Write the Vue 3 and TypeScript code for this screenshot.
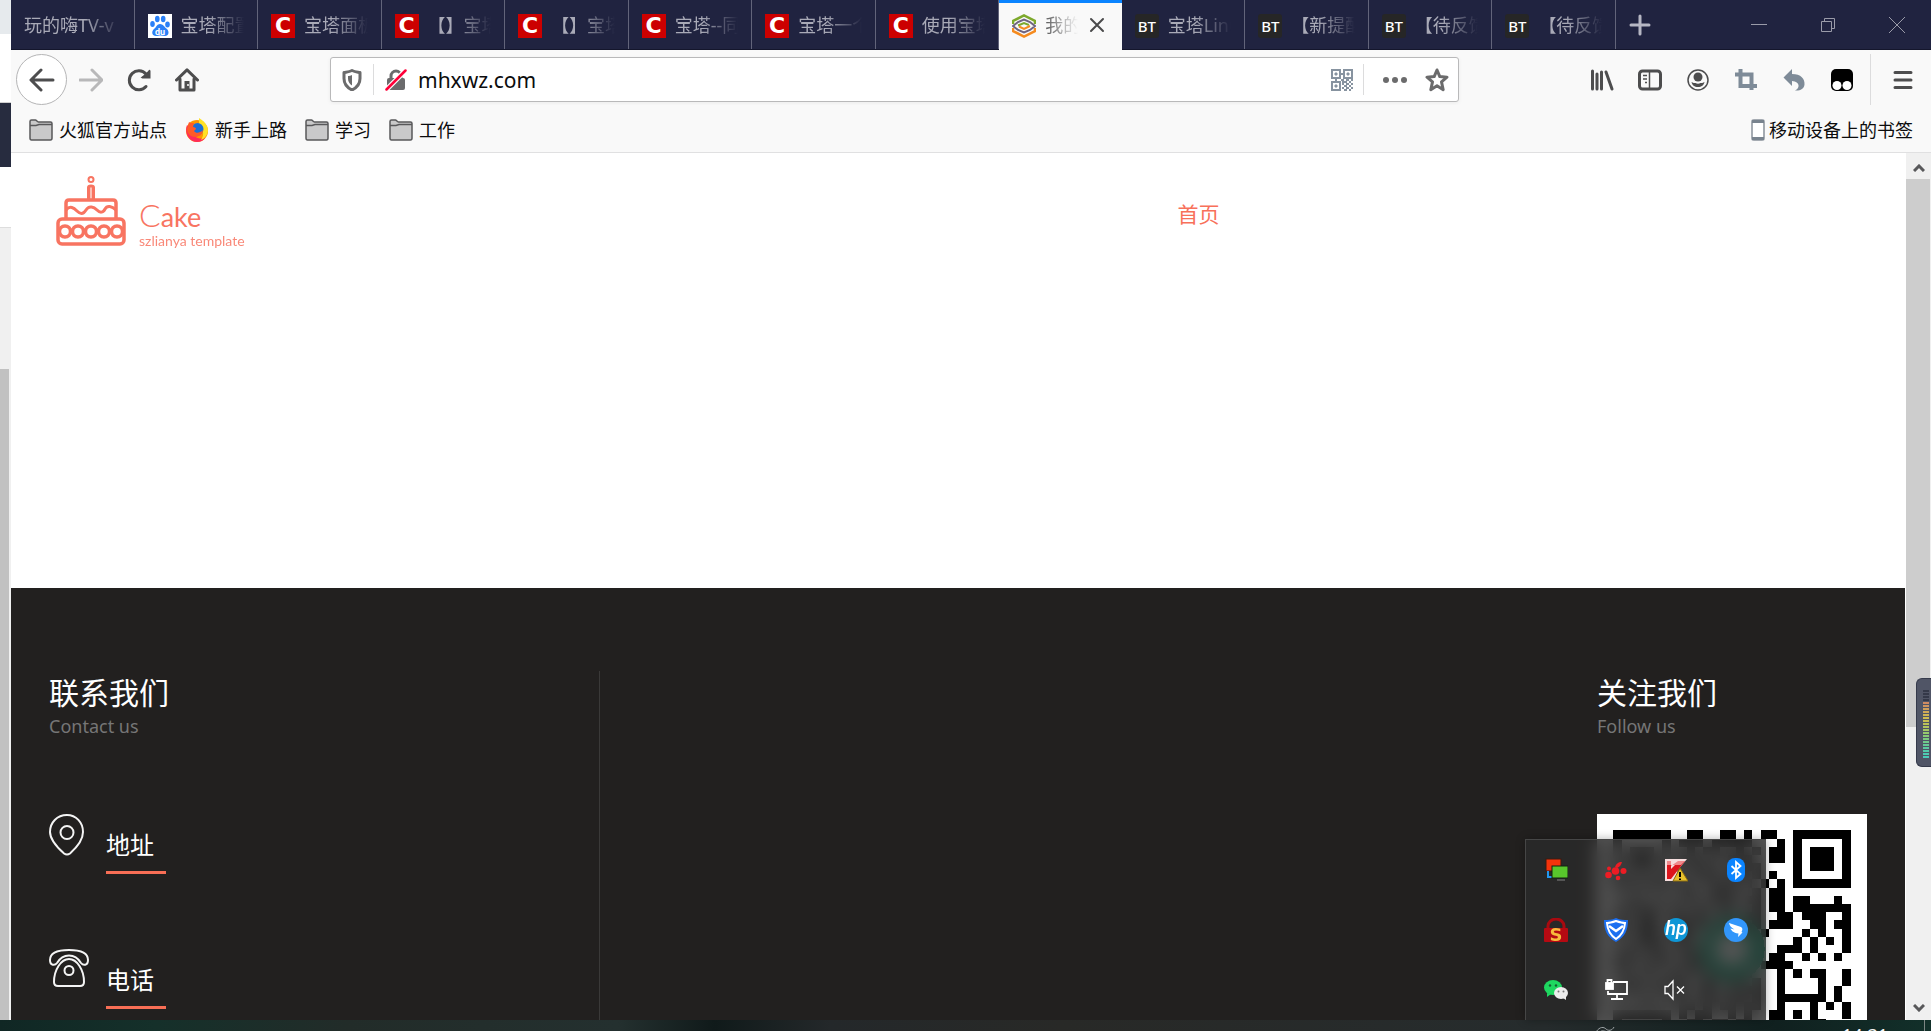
<script setup lang="ts">
import { ref } from 'vue'

type Favicon = 'none' | 'baidu' | 'c' | 'hex' | 'bt'

interface Tab {
  title: string
  icon: Favicon
  active?: boolean
}

const tabs: Tab[] = [
  { title: '玩的嗨TV-v', icon: 'none' },
  { title: '宝塔配置', icon: 'baidu' },
  { title: '宝塔面板', icon: 'c' },
  { title: '【】宝塔', icon: 'c' },
  { title: '【】宝塔', icon: 'c' },
  { title: '宝塔--同步', icon: 'c' },
  { title: '宝塔一个', icon: 'c' },
  { title: '使用宝塔', icon: 'c' },
  { title: '我的网', icon: 'hex', active: true },
  { title: '宝塔Linux', icon: 'bt' },
  { title: '【新提醒', icon: 'bt' },
  { title: '【待反馈', icon: 'bt' },
  { title: '【待反馈', icon: 'bt' },
]

const bookmarks = [
  { title: '火狐官方站点', folder: true },
  { title: '新手上路', folder: false },
  { title: '学习', folder: true },
  { title: '工作', folder: true },
]

const address = ref('mhxwz.com')

/* QR matrix, one string per module row */
const qrRows = [
  '#######..##..##.#.##..#######',
  '#.....#.###.#####...#.#.....#',
  '#.###.#..#.##..#.#.##.#.###.#',
  '#.###.#.##..#.###..##.#.###.#',
  '#.###.#..###..#.##....#.###.#',
  '#.....#.#..##.##.#.#..#.....#',
  '#######.#.#.#.#.#.#.#.#######',
  '........##..###..#.##........',
  '#.##.##..#.##.#.##.##.##...#.',
  '.##.#..##.#..##..#.##.#######',
  '#..###.#..##.#..##..##.###..#',
  '##.##..####.#....#.###..##.##',
  '.#.###.##..#......#....#.#..#',
  '#..##.#.##.#..........#.#.#.#',
  '.##.##..#.##........###.#...#',
  '#.#..##.##.#.......##..#.#.#.',
  '##.##.#..##..#....####.......',
  '.#..#..##.#.##.##...#.#.##..#',
  '#.##.##.#..##.##.#..#....#..#',
  '.##..#.##.##..#.##..#....#.#.',
  '#..##.#.#..##.##.#..######.#.',
  '........##.#.##.##..#...#.#.#',
  '#######.#.##..#.#..##.#.#...#',
  '#.....#..##.##.##..##...##...',
  '#.###.#.#.##.#.#....#####.#..',
]
const qrPath = qrRows
  .flatMap((row, y) => [...row].map((m, x) => (m === '#' ? `M${x + 2} ${y + 2}h1v1h-1z` : '')))
  .join('')

const meterColors = [
  '#343949', '#343949', '#343949', '#343949', '#cf8b62', '#cf9660', '#cfa05c', '#cfa957',
  '#cfb453', '#cfbc50', '#c7c052', '#bcc358', '#b3c65e', '#a5c865', '#96ca6d', '#89ca76',
  '#7ccb80', '#70cc8b', '#66cb96', '#5ccba1', '#54cbaa', '#4ecbb2', '#4bcbb8',
]

const contacts = [
  { label: '地址', icon: 'pin' },
  { label: '电话', icon: 'phone' },
]
</script>

<template>
  <div class="desktop">
    <div class="workspace">
      <div class="behind" aria-hidden="true">
        <span class="b1"></span><span class="b2"></span><span class="b3"></span><span class="b4"></span>
        <span class="b5"></span><span class="b6"></span>
      </div>

      <div class="browser">
        <header class="tabbar">
          <div class="tabs">
            <div v-for="(tab, i) in tabs" :key="i" class="tab" :class="{ active: tab.active }">
              <button class="tab-main" type="button">
                <svg v-if="tab.icon === 'baidu'" class="fav" viewBox="0 0 24 24">
                  <rect width="24" height="24" fill="#fff" />
                  <g fill="#2b80f7">
                    <ellipse cx="4.500" cy="10" rx="2.300" ry="3" />
                    <ellipse cx="9.300" cy="5" rx="2.300" ry="3.300" />
                    <ellipse cx="15.200" cy="5" rx="2.300" ry="3.300" />
                    <ellipse cx="19.500" cy="10.500" rx="2.300" ry="3" />
                    <path d="M12 10c-3 0-3.500 3-6 5-3 2.500-2 7 2 7 2 0 3-.5 4.500-.5s3 .5 4.500.5c4 0 4.500-4.500 2-7-2.500-2-4-5-7-5z" />
                  </g>
                  <text x="12" y="20.500" text-anchor="middle" font-size="9" font-weight="700" font-family="Roboto, sans-serif" fill="#fff">du</text>
                </svg>
                <span v-else-if="tab.icon === 'c'" class="fav fav-c">C</span>
                <svg v-else-if="tab.icon === 'hex'" class="fav" viewBox="0 0 24 24" fill="none" stroke-width="2.500">
                  <path d="M1 10V7L12 1.500 23 7v3" stroke="#7da92c" />
                  <path d="M1 14v3l11 5.500L23 17v-3" stroke="#f58b1f" />
                  <path d="M1 12l5-4 6-2.500L18 8l5 4-5 4-6 2.500L6 16z" stroke="#6f6480" stroke-width="2" />
                  <path d="M6 11.500l6-2.500 5 2" stroke="#7da92c" stroke-width="2" />
                  <path d="M7 12.500l5 2.500 6-3" stroke="#f58b1f" stroke-width="2" />
                </svg>
                <span v-else-if="tab.icon === 'bt'" class="fav fav-bt">BT</span>
                <span class="tab-title">{{ tab.title }}</span>
              </button>
              <button v-if="tab.active" class="tab-close" type="button" aria-label="关闭标签页">
                <svg viewBox="0 0 16 16"><path d="M2 2l12 12M14 2L2 14" stroke="#4a4a4b" stroke-width="2" stroke-linecap="round" /></svg>
              </button>
            </div>
          </div>
          <div class="window-tools">
            <button class="new-tab" type="button" aria-label="新标签页">
              <svg viewBox="0 0 22 22"><path d="M11 2v18M2 11h18" stroke="#b6b7c3" stroke-width="3" stroke-linecap="round" /></svg>
            </button>
            <div class="window-buttons">
              <button type="button" aria-label="最小化">
                <svg viewBox="0 0 16 16" fill="none" stroke="#9a9ba9"><path d="M0 7.500h16" /></svg>
              </button>
              <button type="button" aria-label="还原">
                <svg viewBox="0 0 16 16" fill="none" stroke="#9a9ba9"><path d="M1.500 4.500h10v10h-10zM4.500 4V1.500h10v10H12" /></svg>
              </button>
              <button type="button" aria-label="关闭">
                <svg viewBox="0 0 16 16" fill="none" stroke="#9a9ba9"><path d="M0 0l16 16M16 0L0 16" /></svg>
              </button>
            </div>
          </div>
        </header>

        <nav class="toolbar">
          <button class="back" type="button" aria-label="后退">
            <svg viewBox="0 0 26 24" fill="none" stroke="#4d4d4e" stroke-width="3" stroke-linecap="round" stroke-linejoin="round"><path d="M24 12H3M12 2L2 12l10 10" /></svg>
          </button>
          <button class="tool forward" type="button" aria-label="前进">
            <svg viewBox="0 0 24 24" fill="none" stroke="#b8b8b9" stroke-width="3" stroke-linecap="round" stroke-linejoin="round"><path d="M1 12h22M13 2l10 10-10 10" /></svg>
          </button>
          <button class="tool" type="button" aria-label="刷新">
            <svg viewBox="0 0 24 24" fill="none" stroke="#4d4d4e" stroke-width="3" stroke-linecap="round"><path d="M19 18.500A9.500 9.500 0 1 1 19 6" /><path d="M13.500 10H23V1.500z" fill="#4d4d4e" stroke="none" /><path d="M22.500 3v6.500h-7" stroke-width="2" /></svg>
          </button>
          <button class="tool" type="button" aria-label="主页">
            <svg viewBox="0 0 24 24" fill="none" stroke="#4d4d4e" stroke-width="3" stroke-linecap="round" stroke-linejoin="round"><path d="M1.500 12L12 1.800 22.500 12M5 11v11h14V11" /><path d="M9.500 21v-8h5v8z" fill="#4d4d4e" stroke="none" /><circle cx="13" cy="17" r="1" fill="#fff" stroke="none" /></svg>
          </button>

          <div class="urlbar">
            <svg class="shield" viewBox="0 0 20 22" fill="none" stroke="#6b6b6c" stroke-width="3" stroke-linejoin="round"><path d="M10 1.500c3 1.500 5.500 1.500 8 2v6c0 5-3 9-8 11.500-5-2.500-8-6.500-8-11.500v-6c2.500-.5 5-.5 8-2z" /><path d="M10 6v10.500c-2.500-1.500-4-4-4-7V7c1.500 0 2.500-.3 4-1z" fill="#6b6b6c" stroke="none" /></svg>
            <i class="bar"></i>
            <svg class="lock" viewBox="0 0 22 22"><path d="M6 10V7a5 5 0 0 1 10 0v3" fill="none" stroke="#6b6b6c" stroke-width="3" /><rect x="2" y="9" width="18" height="12" rx="2" fill="#6b6b6c" /><path d="M1.500 20.500l19-19" stroke="#fff" stroke-width="5" /><path d="M1.500 20.500l19-19" stroke="#ff0039" stroke-width="2.500" stroke-linecap="round" /></svg>
            <input v-model="address" class="address" type="text" aria-label="地址栏" />
            <svg class="qr-mini" viewBox="0 0 22 22" fill="none" stroke="#8793a0" stroke-width="2">
              <path d="M1 1h8v8H1zM13 1h8v8h-8zM1 13h8v8H1z" />
              <path d="M4 4h2v2H4zM16 4h2v2h-2zM4 16h2v2H4z" fill="#8793a0" stroke-width="1" />
              <path d="M9 5h4M5 9v4M10 11h3M11 13h2M15 11h3M20 11h2M13 13h3M18 13h2M11 15h2M15 15h3M20 15h2M13 17h3M18 17h2M11 19h2M15 19h3M20 19h2M13 21h3M18 21h2" />
            </svg>
            <i class="bar"></i>
            <button class="dots" type="button" aria-label="页面操作">
              <svg viewBox="0 0 24 6" fill="#6b6b6c"><circle cx="3" cy="3" r="3" /><circle cx="12" cy="3" r="3" /><circle cx="21" cy="3" r="3" /></svg>
            </button>
            <button class="star" type="button" aria-label="收藏">
              <svg viewBox="0 0 24 24" fill="none" stroke="#6b6b6c" stroke-width="3" stroke-linejoin="round"><path d="M12 2l2.800 6.600 7.200.6-5.500 4.700 1.700 7.800L12 17.800l-6.200 3.900 1.700-7.800L2 9.200l7.200-.6z" /></svg>
            </button>
          </div>

          <div class="actions">
            <button type="button" aria-label="我的足迹">
              <svg viewBox="0 0 24 24" stroke="#4d4d4e" stroke-width="3" stroke-linecap="round"><path d="M2.500 3v18M7 6v15M11.500 4v17M16 4l6 17" /></svg>
            </button>
            <button type="button" aria-label="侧栏">
              <svg viewBox="0 0 24 24" fill="none" stroke="#4d4d4e" stroke-width="3"><rect x="1.500" y="3" width="21" height="18" rx="3" /><path d="M11.500 3v18" stroke-width="1.500" /><path d="M5 7.500h4M5 11h4M7 14.500h2" stroke-width="1.500" /></svg>
            </button>
            <button type="button" aria-label="账户">
              <svg viewBox="0 0 24 24"><circle cx="12" cy="12" r="10" fill="none" stroke="#4d4d4e" stroke-width="1.500" /><circle cx="12" cy="9" r="4.500" fill="#4d4d4e" /><path d="M5.500 14c1.500 1 3 1 4 1 1.500 1 3.500 1 5 0 1 0 2.500 0 4-1-.5 3-3 5-6.500 5s-6-2-6.500-5z" fill="#4d4d4e" /></svg>
            </button>
            <button type="button" aria-label="截图">
              <svg viewBox="0 0 24 24" fill="none" stroke="#7e8b98" stroke-width="4"><path d="M1 6.500h16.500V22M6.500 1v17H23" /></svg>
            </button>
            <button type="button" aria-label="撤销">
              <svg viewBox="0 0 24 24" fill="#7e8b98"><path d="M10 1v5c9 0 13 5 12.500 10.500C22 21 18 23 13 22.500c5-2 5.500-9-3-9.500v5L1.500 9.500z" /></svg>
            </button>
            <button type="button" aria-label="脚本管理">
              <svg viewBox="0 0 24 24"><rect x="1" y="1" width="22" height="22" rx="5" fill="#000" /><circle cx="7" cy="17.500" r="4.500" fill="#fff" /><circle cx="17" cy="17.500" r="4.500" fill="#fff" /></svg>
            </button>
          </div>
          <button class="menu" type="button" aria-label="菜单">
            <svg viewBox="0 0 20 20" stroke="#4d4d4e" stroke-width="3" stroke-linecap="round"><path d="M2 2.500h16M2 10h16M2 17.500h16" /></svg>
          </button>
        </nav>

        <nav class="bookmarks">
          <a v-for="b in bookmarks" :key="b.title" href="#">
            <svg v-if="b.folder" class="folder" viewBox="0 0 24 22" fill="#c9c9ca" stroke="#58585a" stroke-width="1.500"><path d="M1 19V2.500C1 1.500 1.500 1 2.500 1h4c1 0 1.500 2 3 2h12c1 0 1.500.5 1.500 1.500V19c0 1-.5 2-1.500 2h-19C1.500 21 1 20 1 19z" /><path d="M1 6.500h6L10 5.500h13" fill="none" /></svg>
            <svg v-else class="folder" viewBox="0 0 24 24">
              <circle cx="12" cy="13" r="11" fill="#ff9500" />
              <path d="M2 7C-1 15 4 24 12 24c4 0 7-2 8-4-6 2-12-1-13-7z" fill="#ff2c5a" />
              <path d="M14 0c5 3 9 7 9 13-1 5-4 8-7 9 4-6 2-11-2-14z" fill="#ffe226" />
              <circle cx="12.500" cy="11" r="6" fill="#1b6fd6" />
              <path d="M4 4c1 1 3 1 5 1l-1 4c2 0 3 1 3 2l-2 2c2 3 6 2 9-1-1 5-4 7-8 7-5 0-8-4-8-8z" fill="#ff5a28" />
            </svg>
            <span>{{ b.title }}</span>
          </a>
          <a class="mobile" href="#">
            <svg viewBox="0 0 14 22"><rect x="1" y="1" width="12" height="20" rx="2" fill="#fff" stroke="#a5abb2" stroke-width="2" /><path d="M1 1h12v3H1zM1 18h12v3H1z" fill="#78838e" /></svg>
            <span>移动设备上的书签</span>
          </a>
        </nav>

        <div class="viewport">
          <main class="page">
            <section class="hero">
              <a class="logo" href="#">
                <svg viewBox="0 0 70 70" fill="none" stroke="#f87461" stroke-width="3.500" stroke-linejoin="round">
                  <circle cx="35" cy="3.500" r="2.500" stroke-width="2" />
                  <path d="M32.500 24V11.500c0-2 5-2 5 0V24" fill="#fbc0b6" stroke-width="3" />
                  <path d="M10 43V27c0-2 1-3 3-3h44c2 0 3 1 3 3v16" />
                  <path d="M10 34c4-5 8-2 11 1s6 4 9-1 8-3 11 0 6 3 8-1 7-3 11 1" stroke-width="3" />
                  <rect x="2" y="43" width="66" height="25" rx="4" />
                  <circle cx="9" cy="55.500" r="5.500" /><circle cx="22" cy="55.500" r="5.500" /><circle cx="35" cy="55.500" r="5.500" /><circle cx="48" cy="55.500" r="5.500" /><circle cx="61" cy="55.500" r="5.500" />
                </svg>
                <span class="brand"><span class="brand-name"><span class="cap">C</span>ake</span><span class="brand-sub">szlianya template</span></span>
              </a>
              <a class="home" href="#">首页</a>
            </section>

            <footer class="footer">
              <section class="contact">
                <h2>联系我们</h2>
                <p>Contact us</p>
                <div v-for="c in contacts" :key="c.label" class="contact-row">
                  <svg v-if="c.icon === 'pin'" viewBox="0 0 40 42" fill="none" stroke="#f4f4f4" stroke-width="2"><path d="M18 1C8 1 1 8.500 1 18c0 9 9 17 14 21.500q3 2 6 0C26 35 34 27 34 18 34 8.500 27 1 18 1z" /><circle cx="18" cy="18.500" r="6.500" /></svg>
                  <svg v-else viewBox="0 0 40 42" fill="none" stroke="#f4f4f4" stroke-width="2"><path d="M20 1C9 1 1 4 1 11c0 6 5 5.500 7 3 3-5 7-7.500 12-7.500S29 9 32 14c2 2.500 7 3 7-3C39 4 31 1 20 1z" /><path d="M20 10c-8 0-15 11-15 23 0 2.500 1.500 4 4 4h22c2.500 0 4-1.500 4-4 0-12-7-23-15-23z" /><circle cx="20" cy="21.500" r="4.500" /></svg>
                  <h3>{{ c.label }}</h3>
                </div>
              </section>
              <section class="follow">
                <h2>关注我们</h2>
                <p>Follow us</p>
                <svg class="qr" viewBox="0 0 33 33" shape-rendering="crispEdges">
                  <rect width="33" height="33" fill="#fff" />
                  <path :d="qrPath" />
                  <circle cx="16.500" cy="16.500" r="3" fill="#fff" stroke="#00a070" stroke-width="2" />
                </svg>
              </section>
            </footer>
          </main>
          <div class="scrollbar" aria-hidden="true">
            <svg viewBox="0 0 12 8" fill="none" stroke="#58585a" stroke-width="3"><path d="M1 7l5-5 5 5" /></svg>
            <div class="track"><div class="thumb"></div></div>
            <svg viewBox="0 0 12 8" fill="none" stroke="#58585a" stroke-width="3"><path d="M1 1l5 5 5-5" /></svg>
          </div>
        </div>
      </div>
    </div>

    <div class="taskbar">
      <svg class="net" viewBox="0 0 20 8" fill="none" stroke="#a0a6a8"><path d="M1 7c4-6 8-5 10-3s6 2 8-2M5 7c3-3 6 1 10-1" /></svg>
      <time class="clock">14:31</time>
      <i class="peek"></i>
    </div>

    <div class="tray">
      <span><svg viewBox="0 0 24 24"><rect x="2" y="1" width="15" height="12" fill="#f5330b" stroke="#3a1a10" /><path d="M4 13v6h4" fill="none" stroke="#2197ef" stroke-width="2" /><rect x="8" y="8" width="16" height="12" fill="#58c62c" stroke="#102010" /><path d="M13 22h8" stroke="#555" stroke-width="2" /></svg></span>
      <span><svg viewBox="0 0 24 24" fill="#ed1c24"><circle cx="11.500" cy="13" r="3.800" /><circle cx="4.500" cy="17" r="3.300" /><circle cx="19.500" cy="13" r="3" /><circle cx="14" cy="20" r="2.300" /><circle cx="5" cy="10.500" r="2" /><path d="M11 9c1-3 3-5 7-5-1 3-2 5-5 6z" /></svg></span>
      <span><svg viewBox="0 0 24 24"><path d="M1 1h22L13 13l9 10H1z" fill="#f6dede" /><path d="M3 3h4v8l8-8h6L7 21H3z" fill="#dd151c" /><path d="M3 3h4v5l7-5h7l-4 4H3z" fill="#ef8a8c" /><path d="M16 10l8 13H9z" fill="#e8c12c" stroke="#8a6a10" /><path d="M16 14v5M16 20.500v1.500" stroke="#000" stroke-width="2" /></svg></span>
      <span><svg viewBox="0 0 24 24"><rect x="3" y="0" width="18" height="24" rx="8" fill="#0a84ff" /><path d="M7.500 8l9 8-4.500 4V4l4.500 4-9 8" fill="none" stroke="#fff" stroke-width="1.800" /></svg></span>
      <span><svg viewBox="0 0 24 24"><path d="M4 11V8a8 7 0 0 1 16 0v3" fill="none" stroke="#a80a10" stroke-width="3" /><rect y="10" width="24" height="14" rx="1" fill="#b50a12" /><text x="12" y="23" text-anchor="middle" font-size="18" font-weight="700" font-family="'DejaVu Sans', sans-serif" fill="#f8b93c">S</text></svg></span>
      <span><svg viewBox="0 0 24 24"><path d="M12 0c4 2 8 2 12 2 0 10-3 17-12 22C3 19 0 12 0 2c4 0 8 0 12-2z" fill="#1c6ff0" /><path d="M12 3c3 1 6 2 9 2-.5 7-3 12-9 16-6-4-8.500-9-9-16 3 0 6-1 9-2z" fill="none" stroke="#fff" stroke-width="2" /><path d="M5 8l7 5 7-5" fill="none" stroke="#fff" stroke-width="2.500" /></svg></span>
      <span><svg viewBox="0 0 24 24"><circle cx="12" cy="12" r="12" fill="#0f96d6" /><text x="12" y="17" text-anchor="middle" font-size="20" font-style="italic" font-weight="500" font-family="Roboto, sans-serif" fill="#fff">hp</text></svg></span>
      <span><svg viewBox="0 0 24 24"><circle cx="12" cy="12" r="12" fill="#3296fa" /><path d="M5 5l12 4c2 1 1.500 3 .5 5l1 .5L14 19l.5-3.500C9 15 7 12 6.500 10.500l4 1C7 9.500 5.500 7.500 5 5z" fill="#fff" /></svg></span>
      <span><svg viewBox="0 0 24 24"><ellipse cx="9" cy="9.500" rx="9" ry="7.500" fill="#1ed760" /><path d="M3 15l0 4 4-3z" fill="#1ed760" /><circle cx="6" cy="7.500" r="1.200" fill="#145c30" /><circle cx="12" cy="7.500" r="1.200" fill="#145c30" /><ellipse cx="17" cy="15" rx="7" ry="6" fill="#ececec" /><path d="M19 20l3 2v-4z" fill="#ececec" /><circle cx="14.500" cy="13.500" r="1" fill="#777" /><circle cx="19.500" cy="13.500" r="1" fill="#777" /></svg></span>
      <span><svg viewBox="0 0 24 24" fill="none" stroke="#fff" stroke-width="1.800"><path d="M9 4h14v12H4v-3M13 16v5M7 21h12" /><rect x="2" y="5" width="7" height="6" fill="#fff" /><path d="M3.500 5V2h4v3" /></svg></span>
      <span><svg viewBox="0 0 24 24" fill="none" stroke="#fff" stroke-width="1.300"><path d="M1 8.500h3l5-5.500v18l-5-5.500H1zM13 8.500l7 7M20 8.500l-7 7" /></svg></span>
    </div>

    <div class="meter" aria-hidden="true">
      <i v-for="(color, i) in meterColors" :key="i" :style="{ background: color }"></i>
    </div>
  </div>
</template>

<style>
html, body { margin: 0; overflow: hidden; }
</style>

<style scoped>
* { box-sizing: border-box; }
.desktop {
  position: relative;
  display: flex;
  flex-direction: column;
  height: 100vh;
  overflow: hidden;
  font-family: "Noto Sans", "Noto Sans CJK SC", sans-serif;
  font-size: 18px;
  color: #0c0c0d;
}
button { padding: 0; border: 0; background: none; font: inherit; color: inherit; display: flex; align-items: center; justify-content: center; }
a { color: inherit; text-decoration: none; }
svg { display: block; flex: none; }
h2, h3, p { margin: 0; font-weight: 400; }

.workspace { flex: 1; min-height: 0; display: flex; }
.behind { width: 11px; flex: none; display: flex; flex-direction: column; background: #f0f0f0; }
.b1 { height: 34px; background: #e6eaed; }
.b2 { height: 69px; background: #fff; border-bottom: 1px solid #d0d0d0; }
.b3 { height: 64px; background: #272c3f; }
.b4 { height: 60px; background: #fff; }
.b5 { height: 142px; border-top: 1px solid #ddd; }
.b6 { flex: 1; width: 9px; background: #c1c1c1; }

.browser { flex: 1; min-width: 0; display: flex; flex-direction: column; }
.tabbar { height: 50px; flex: none; display: flex; background: #202340; border-bottom: 1px solid #14162c; }
.tabs { flex: 1; min-width: 0; display: flex; }
.tab { flex: 1 1 0; min-width: 0; display: flex; border-right: 1px solid #62647a; color: #a9aab7; }
.tab-main { flex: 1; min-width: 0; justify-content: flex-start; gap: 9px; padding: 0 13px; }
.tab-title {
  flex: 1; min-width: 0; overflow: hidden; white-space: nowrap; text-align: left; line-height: 30px;
  -webkit-mask-image: linear-gradient(to left, transparent, #000 36px);
  mask-image: linear-gradient(to left, transparent, #000 36px);
}
.tab.active { height: 50px; background: #f9f9f9; box-shadow: inset 0 3px #0a84ff; color: #4a4a4b; border-right: 0; }
.tab.active .tab-main { padding: 0 0 0 13px; }
.tab-close { width: 44px; padding-right: 6px; }
.tab-close svg { width: 16px; }
.fav { width: 24px; height: 24px; flex: none; margin-top: 2px; }
.fav-c { background: #c00; color: #fff; font: 700 22px/24px "DejaVu Sans", sans-serif; text-align: center; }
.fav-bt { background: #262626; border-radius: 3px; color: #fff; font: 500 15px/24px "Noto Sans", sans-serif; text-align: center; }
.window-tools { width: 315px; flex: none; display: flex; align-items: center; }
.new-tab { width: 48px; height: 48px; }
.new-tab svg { width: 22px; }
.window-buttons { flex: 1; display: flex; justify-content: flex-end; }
.window-buttons button { width: 69px; height: 48px; }
.window-buttons svg { width: 16px; }

.toolbar { height: 55px; flex: none; display: flex; align-items: center; background: #f9f9f9; padding: 4px 18px 0 5px; }
.back { width: 51px; height: 51px; border: 1px solid #b5b5b6; border-radius: 50%; background: #fff; }
.back svg { width: 26px; }
.tool { width: 48px; height: 48px; }
.tool svg { width: 24px; }
.urlbar {
  flex: 1; min-width: 0; height: 45px; margin: 0 119px; display: flex; align-items: center;
  border: 1px solid #b9b9ba; border-radius: 3px; background: #fff; box-shadow: 0 1px 4px rgba(0, 0, 0, .06);
  padding: 0 9px 0 11px;
}
.shield { width: 20px; margin-right: 11px; }
.lock { width: 22px; margin: 0 11px; }
.bar { width: 1px; height: 31px; background: #dcdcdd; flex: none; }
.address { flex: 1; min-width: 0; height: 40px; border: 0; outline: 0; padding: 0; background: none; color: #0c0c0d; font: 21px "Noto Sans", sans-serif; }
.qr-mini { width: 22px; margin-right: 10px; }
.dots { width: 24px; margin: 0 18px 0 19px; }
.dots svg { width: 24px; }
.star svg { width: 24px; }
.actions { display: flex; border-right: 1px solid #dcdcdd; padding-right: 4px; }
.actions button { width: 48px; height: 51px; }
.actions svg { width: 24px; }
.menu { width: 42px; height: 48px; padding-left: 21px; }
.menu svg { width: 20px; }

.bookmarks { height: 48px; flex: none; display: flex; align-items: center; gap: 18px; background: #f9f9f9; border-bottom: 1px solid #e0e0e1; padding: 3px 18px 0 18px; line-height: 28px; }
.bookmarks a { display: flex; align-items: center; gap: 6px; }
.folder { width: 24px; }
.bookmarks .mobile { margin-left: auto; gap: 4px; }
.mobile svg { width: 14px; }

.viewport { flex: 1; min-height: 0; display: flex; }
.page { flex: 1; min-width: 0; display: flex; flex-direction: column; background: #fff; overflow: hidden; border-right: 1px solid #fff; }
.hero { height: 435px; flex: none; display: flex; align-items: flex-start; padding: 21px 0 0 45px; }
.logo { display: flex; width: 60%; margin-right: 12px; color: #f87461; }
.logo svg { width: 70px; }
.brand { display: flex; flex-direction: column; margin: 24px 0 0 13px; font-family: Lato, sans-serif; font-weight: 400; }
.brand-name { font-size: 27px; line-height: 34px; }
.brand-name .cap { font-size: 32px; font-weight: 300; }
.brand-sub { font-size: 14px; line-height: 14px; opacity: .85; }
.home { color: #f8705a; font-size: 21px; line-height: 32px; margin-top: 24px; }

.footer { flex: 1; min-height: 0; display: flex; justify-content: space-between; background: #22201f; padding: 83px 38px 0; color: #fff; overflow: hidden; }
.contact { width: 551px; border-right: 1px solid #3a3938; }
.follow { width: 270px; }
.footer h2 { font-size: 30px; line-height: 44px; }
.footer p { font-size: 18px; line-height: 22px; color: #767676; }
.contact-row { display: flex; align-items: flex-start; gap: 17px; height: 135px; }
p + .contact-row { margin-top: 77px; }
.contact-row svg { width: 40px; }
.contact-row h3 { width: 60px; font-size: 24px; line-height: 32px; padding: 15px 0 10px; border-bottom: 3px solid #f86e55; }
.qr { width: 270px; margin-top: 77px; }

.scrollbar { width: 25px; flex: none; display: flex; flex-direction: column; align-items: center; background: #f0f0f0; padding: 11px 0 8px; }
.scrollbar svg { width: 12px; }
.track { flex: 1; width: 100%; margin: 7px 0; padding-right: 1px; }
.thumb { height: 67%; background: #cdcdcd; }

.taskbar { height: 11px; flex: none; overflow: hidden; display: flex; align-items: flex-start; background: linear-gradient(to right, #102724, #15302a 8%, #222c29 18%, #24302f 32%, #101a1a 37%, #24282a 43%, #282927 55%, #262c2d 80%, #10201f 92%, #12302a); }
.net { width: 20px; margin: 5px 0 0 auto; }
.clock { color: #f4f4f4; font-size: 18px; line-height: 24px; margin: 3px 36px 0 227px; }
.peek { width: 1px; height: 11px; background: #7d8684; margin-right: 6px; }

.tray {
  position: absolute; right: 165px; bottom: 11px; display: grid; grid-template-columns: repeat(4, 60px); grid-auto-rows: 60px;
  border: 1px solid #464646; border-bottom: 0; border-right: 0; background: rgba(42, 42, 42, .8); -webkit-backdrop-filter: blur(9px); backdrop-filter: blur(9px);
  box-shadow: 0 0 9px rgba(0, 0, 0, .3);
}
.tray span { display: flex; align-items: center; justify-content: center; }
.tray svg { width: 24px; }

.meter { position: absolute; right: 0; top: 678px; width: 15px; height: 89px; padding: 11px 2px 0 6px; display: flex; flex-direction: column; gap: 1px; background: #505566; border: 1px solid #353a4b; border-right: 0; border-radius: 6px 0 0 6px; }
.meter i { height: 2px; flex: none; }
</style>
